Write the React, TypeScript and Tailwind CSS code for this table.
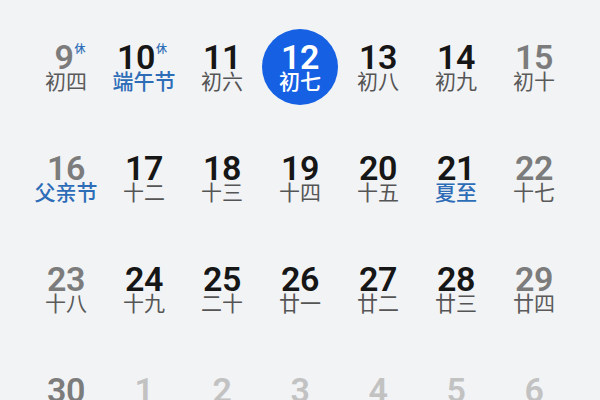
/* 六月月历视图：7 列网格，今天（12 日）用蓝色圆标出。 */

type Day = {
  n: number;
  lunar: string;
  tone: "dark" | "gray" | "faint";
  holiday?: boolean;
  rest?: boolean;
  shift?: string;
  today?: boolean;
};

const DAYS: Day[] = [
  { n: 9, lunar: "初四", tone: "gray", rest: true, shift: "-translate-x-[2px]" },
  { n: 10, lunar: "端午节", tone: "dark", holiday: true, rest: true, shift: "-translate-x-[8px]" },
  { n: 11, lunar: "初六", tone: "dark" },
  { n: 12, lunar: "初七", tone: "dark", today: true },
  { n: 13, lunar: "初八", tone: "dark" },
  { n: 14, lunar: "初九", tone: "dark" },
  { n: 15, lunar: "初十", tone: "gray" },
  { n: 16, lunar: "父亲节", tone: "gray", holiday: true },
  { n: 17, lunar: "十二", tone: "dark" },
  { n: 18, lunar: "十三", tone: "dark" },
  { n: 19, lunar: "十四", tone: "dark" },
  { n: 20, lunar: "十五", tone: "dark" },
  { n: 21, lunar: "夏至", tone: "dark", holiday: true },
  { n: 22, lunar: "十七", tone: "gray" },
  { n: 23, lunar: "十八", tone: "gray" },
  { n: 24, lunar: "十九", tone: "dark" },
  { n: 25, lunar: "二十", tone: "dark" },
  { n: 26, lunar: "廿一", tone: "dark" },
  { n: 27, lunar: "廿二", tone: "dark" },
  { n: 28, lunar: "廿三", tone: "dark" },
  { n: 29, lunar: "廿四", tone: "gray" },
  { n: 30, lunar: "廿五", tone: "gray" },
  { n: 1, lunar: "廿六", tone: "faint" },
  { n: 2, lunar: "廿七", tone: "faint" },
  { n: 3, lunar: "廿八", tone: "faint" },
  { n: 4, lunar: "廿九", tone: "faint" },
  { n: 5, lunar: "六月", tone: "faint" },
  { n: 6, lunar: "初二", tone: "faint" },
];

const numColor = {
  dark: "text-[#161616]",
  gray: "text-[#7c7c7c]",
  faint: "text-[#c2c2c2]",
};

const lunarColor = {
  dark: "text-[#555555]",
  gray: "text-[#5a5a5a]",
  faint: "text-[#c8c8c8]",
};

function Cell({ d }: { d: Day }) {
  const inner = (
    <div className="flex flex-col items-center">
      <div className={`relative ${d.shift ?? ""}`}>
        <span
          className={`block text-[34px] leading-[34px] font-semibold tracking-[-0.5px] ${
            d.today ? "text-white" : numColor[d.tone]
          }`}
        >
          {d.n}
        </span>
        {d.rest && (
          <span className="absolute left-full top-[4px] ml-[1px] text-[11px] leading-[12px] font-medium text-[#2f6fb8] whitespace-nowrap">
            休
          </span>
        )}
      </div>
      <span
        className={`-mt-[3px] text-[21px] leading-[22px] whitespace-nowrap ${
          d.today
            ? "text-white font-medium"
            : d.holiday
              ? "text-[#2d6db8] font-medium"
              : lunarColor[d.tone]
        }`}
      >
        {d.lunar}
      </span>
    </div>
  );

  return (
    <div className="flex h-[111px] items-center justify-center">
      {d.today ? (
        <div className="flex h-[76px] w-[76px] items-center justify-center rounded-full bg-[#1560e3] pb-[1px]">
          {inner}
        </div>
      ) : (
        inner
      )}
    </div>
  );
}

export default function App() {
  return (
    <div
      className="h-[400px] w-[600px] overflow-hidden bg-[#f2f3f5] px-[27px] pt-[11px]"
      style={{ fontFamily: 'Roboto, "Noto Sans CJK SC", sans-serif' }}
    >
      <div className="grid grid-cols-7">
        {DAYS.map((d, i) => (
          <Cell key={i} d={d} />
        ))}
      </div>
    </div>
  );
}
